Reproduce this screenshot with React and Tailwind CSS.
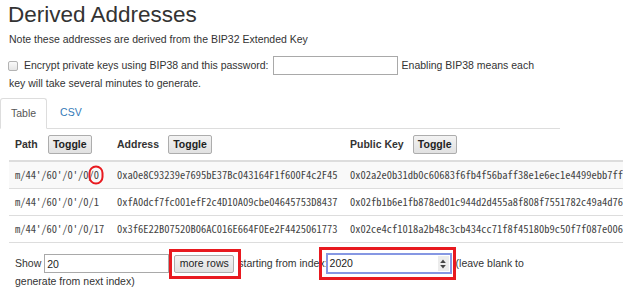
import React from "react";

const mono = "font-['Noto_Sans_Mono_CJK_JP','Liberation_Mono',monospace] text-[10.5px] text-[#444]";

const rows = [
  {
    path: "m/44'/60'/0'/0/0",
    address: "0xa0e8C93239e7695bE37Bc043164F1f600F4c2F45",
    pub: "0x02a2e0b31db0c60683f6fb4f56baff38e1e6ec1e4499ebb7fff3a1d5c8e0b29a47",
    circled: true,
  },
  {
    path: "m/44'/60'/0'/0/1",
    address: "0xfA0dcf7fc001efF2c4D10A09cbe04645753D8437",
    pub: "0x02fb1b6e1fb878ed01c944d2d455a8f808f7551782c49a4d76a0e3b5c9d21f08",
  },
  {
    path: "m/44'/60'/0'/0/17",
    address: "0x3f6E22B07520B06AC016E664F0Ee2F4425061773",
    pub: "0x02ce4cf1018a2b48c3cb434cc71f8f45180b9c50f7f087e006b4d2a19e8c7f53",
  },
];

function ToggleButton() {
  return (
    <button className="w-[44px] h-[19px] flex items-center justify-center bg-gradient-to-b from-[#f3f3f3] to-[#e1e1e1] border border-[#adadad] rounded-[2px] text-[10.5px] font-bold text-[#222]">
      Toggle
    </button>
  );
}

function RedBox({ className }) {
  return <span className={`absolute border-[3px] border-[#e8191f] pointer-events-none ${className}`} />;
}

export default function App() {
  return (
    <div className="w-[623px] h-[293px] overflow-hidden bg-white text-[#333] text-[10.5px] font-['Liberation_Sans',Arial,sans-serif]">
      {/* Heading */}
      <h2 className="pl-[8px] pt-[2px] text-[22.5px] leading-[26px] font-normal">Derived Addresses</h2>
      <p className="pl-[9px] mt-[4px] leading-[15px]">Note these addresses are derived from the BIP32 Extended Key</p>

      {/* BIP38 */}
      <div className="mt-[9px] pl-[8px] h-[19px] flex items-center">
        <span className="w-[10px] h-[10px] rounded-[2px] border border-[#b3b3b3] bg-gradient-to-b from-[#fafafa] to-[#e6e6e6]" />
        <span className="ml-[6px] leading-[15px]">Encrypt private keys using BIP38 and this password:</span>
        <input type="text" className="ml-[4px] w-[125px] h-[19px] border border-[#a9a9a9] bg-white outline-none" />
        <span className="ml-[4px] leading-[15px]">Enabling BIP38 means each</span>
      </div>
      <div className="pl-[9px] mt-[1px] leading-[15px]">key will take several minutes to generate.</div>

      {/* Tabs */}
      <div className="mt-[7px] w-[560px] h-[31px] flex items-end border-b border-[#ddd]">
        <div className="-mb-px h-[31px] px-[10px] flex items-center border border-[#ddd] border-b-white rounded-t-[3px] bg-white text-[#555]">
          Table
        </div>
        <div className="ml-[2px] h-[30px] px-[11px] flex items-center text-[#337ab7]">CSV</div>
      </div>

      {/* Table */}
      <div className="ml-[9px] w-[704px]">
        <div className="grid grid-cols-[102px_233px_369px] h-[33px] border-b-2 border-[#ddd] font-bold">
          <div className="pl-[6px] flex items-center">
            Path
            <span className="ml-[10px]"><ToggleButton /></span>
          </div>
          <div className="pl-[6px] flex items-center">
            Address
            <span className="ml-[9px]"><ToggleButton /></span>
          </div>
          <div className="pl-[6px] flex items-center">
            Public Key
            <span className="ml-[9px]"><ToggleButton /></span>
          </div>
        </div>
        {rows.map((r, i) => (
          <div
            key={r.path}
            className={`grid grid-cols-[102px_233px_369px] h-[27px] border-b border-[#ddd] ${i === 0 ? "bg-[#f9f9f9]" : "bg-white"} ${mono}`}
          >
            <div className="pl-[6px] flex items-center whitespace-nowrap">
              {r.circled ? (
                <>
                  {r.path.slice(0, -1)}
                  <span className="relative inline-flex">
                    {r.path.slice(-1)}
                    <span className="absolute left-1/2 top-1/2 -translate-x-1/2 -translate-y-1/2 w-[15px] h-[19px] rounded-full border-[2.5px] border-[#e8191f]" />
                  </span>
                </>
              ) : (
                r.path
              )}
            </div>
            <div className="pl-[6px] flex items-center whitespace-nowrap">{r.address}</div>
            <div className="pl-[6px] flex items-center whitespace-nowrap">{r.pub}</div>
          </div>
        ))}
      </div>

      {/* More rows */}
      <div className="mt-[10px] pl-[15px] h-[21px] flex items-center whitespace-nowrap">
        <span>Show</span>
        <input
          type="text"
          defaultValue="20"
          className="ml-[3px] w-[125px] h-[19px] px-[2px] border border-[#a9a9a9] bg-white text-[#222] outline-none"
        />
        <span className="relative ml-[5px] inline-flex">
          <button className="w-[60px] h-[18px] flex items-center justify-center bg-gradient-to-b from-[#f3f3f3] to-[#e1e1e1] border border-[#adadad] rounded-[2px] text-[#222]">
            more rows
          </button>
          <RedBox className="-left-[5px] -right-[7px] -top-[6px] -bottom-[6px]" />
        </span>
        <span className="ml-[4px]">starting from index:</span>
        <span className="relative -ml-[2px] inline-flex">
          <span className="w-[126px] h-[21px] flex items-center border-2 border-[#8597e3] bg-white pl-[2px] pr-[1px] text-[#222]">
            <span className="flex-1">2020</span>
            <span className="w-[11px] h-[15px] bg-[#ececec] flex items-center justify-center">
              <svg width="6" height="10" viewBox="0 0 6 10">
                <path d="M3 0.5 L5.8 4 H0.2 Z" fill="#444" />
                <path d="M3 9.5 L5.8 6 H0.2 Z" fill="#444" />
              </svg>
            </span>
          </span>
          <RedBox className="-left-[7px] -right-[4px] -top-[6px] -bottom-[6px]" />
        </span>
        <span className="ml-[4px]">(leave blank to</span>
      </div>
      <div className="pl-[15px] leading-[15px]">generate from next index)</div>
    </div>
  );
}
